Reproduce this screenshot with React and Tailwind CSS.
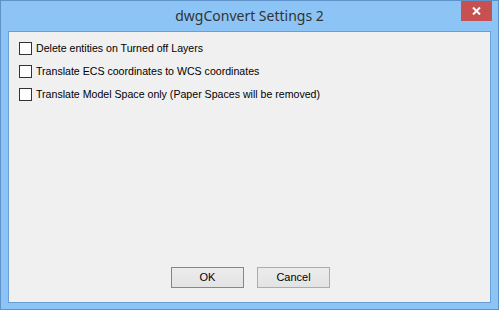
import React from 'react';

const options = [
  'Delete entities on Turned off Layers',
  'Translate ECS coordinates to WCS coordinates',
  'Translate Model Space only (Paper Spaces will be removed)',
];

const Checkbox = ({ label }) => (
  <label className="flex items-center h-[13px]">
    <span className="w-[13px] h-[13px] border border-[#333333] bg-white shrink-0" />
    <span className="ml-[4px] text-[10.6px] leading-[13px] text-black">{label}</span>
  </label>
);

const App = () => {
  return (
    <div
      className="w-[499px] h-[310px] border border-[#5f92c9] bg-[#8cc4f6] flex flex-col"
      style={{ fontFamily: '"Liberation Sans", Arial, sans-serif' }}
    >
      {/* title bar */}
      <div className="relative h-[30px] shrink-0 flex items-center justify-center">
        <span
          className="text-[14px] text-[#333333] -mt-[1px]"
          style={{ fontFamily: '"Noto Sans", "Open Sans", sans-serif' }}
        >
          dwgConvert Settings 2
        </span>
        <button className="absolute top-0 right-[6px] w-[31px] h-[20px] bg-[#c75050] flex items-center justify-center">
          <svg width="9" height="8" viewBox="0 0 9 8">
            <path d="M1 0.5 L8 7.5 M8 0.5 L1 7.5" stroke="white" strokeWidth="2" />
          </svg>
        </button>
      </div>

      {/* client area */}
      <div className="flex-1 mx-[7px] mb-[6px] border border-[#6a9fd6] bg-[#f0f0f0] flex flex-col">
        <div className="pl-[10px] pt-[10px] flex flex-col gap-[10px]">
          {options.map(o => (
            <Checkbox key={o} label={o} />
          ))}
        </div>

        <div className="flex-1" />

        <div className="flex justify-center gap-[13px] pb-[14px] pl-[2px]">
          <button className="w-[73px] h-[21px] border border-[#3399ff] bg-gradient-to-b from-[#ececec] to-[#e3e3e3] text-[11px] text-black">
            OK
          </button>
          <button className="w-[73px] h-[21px] border border-[#acacac] bg-gradient-to-b from-[#ececec] to-[#e3e3e3] text-[11px] text-black">
            Cancel
          </button>
        </div>
      </div>
    </div>
  );
};

export default App;
